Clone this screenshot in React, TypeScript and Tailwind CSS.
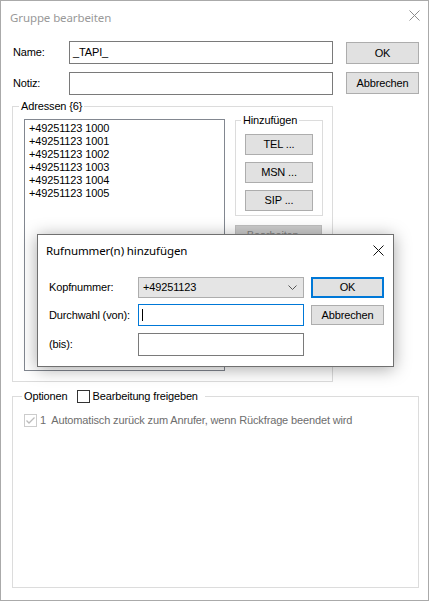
import React from "react";

function XIcon({ color, size = 10 }: { color: string; size?: number }) {
  return (
    <svg width={size + 1} height={size + 1} viewBox={`0 0 ${size + 1} ${size + 1}`} className="block">
      <path d={`M0.5 0.5 L${size + 0.5} ${size + 0.5} M${size + 0.5} 0.5 L0.5 ${size + 0.5}`} stroke={color} strokeWidth="1" fill="none" />
    </svg>
  );
}

function Btn({ children, className = "" }: { children: React.ReactNode; className?: string }) {
  return (
    <div className={`flex items-center justify-center bg-[#e1e1e1] border border-[#adadad] ${className}`}>{children}</div>
  );
}

export default function App() {
  const numbers = ["1000", "1001", "1002", "1003", "1004", "1005"];
  return (
    <div className="w-[430px] h-[601px] bg-white">
      <div className="relative w-[429px] h-[601px] border border-[#aaaaaa] bg-white font-['Liberation_Sans',Arial,sans-serif] text-[11px] leading-[13px] tracking-[-0.14px] text-black">
        {/* title bar */}
        <div className="h-[33px] flex justify-between pl-[9px] pr-[8px]">
          <span className="self-center font-['Noto_Sans',sans-serif] text-[11.5px] tracking-[-0.1px] text-[#999999]">Gruppe bearbeiten</span>
          <div className="mt-[9px]">
            <XIcon color="#8c8c8c" />
          </div>
        </div>

        {/* body */}
        <div className="pl-[11px] pt-[7px]">
          <div className="flex">
            {/* left column */}
            <div className="w-[321px]">
              <div className="flex items-center h-[23px]">
                <span className="w-[57px] pl-[1px]">Name:</span>
                <div className="w-[264px] h-[23px] border border-[#7a7a7a] flex items-center pl-[3px]">_TAPI_</div>
              </div>
              <div className="flex items-center h-[23px] mt-[8px]">
                <span className="w-[57px] pl-[1px]">Notiz:</span>
                <div className="w-[264px] h-[23px] border border-[#7a7a7a]"></div>
              </div>

              <fieldset className="mt-[4px] h-[283px] border border-[#dcdcdc]">
                <legend className="ml-[6px] px-[2px] leading-[14px]">Adressen {"{6}"}</legend>
                <div className="flex items-start pl-[11px]">
                  <div className="mt-[6px] w-[201px] h-[252px] border border-[#828790] pl-[4px] pt-[2px]">
                    {numbers.map((n) => (
                      <div key={n} className="leading-[13px] whitespace-pre">+49251123 {n}</div>
                    ))}
                  </div>
                  <div className="ml-[10px] flex flex-col">
                    <fieldset className="w-[88px] border border-[#dcdcdc] pb-[4px]">
                      <legend className="ml-[5px] px-[2px] leading-[14px]">Hinzufügen</legend>
                      <div className="flex flex-col pl-[9px]">
                        <Btn className="mt-[7px] w-[68px] h-[21px]">TEL ...</Btn>
                        <Btn className="mt-[7px] w-[68px] h-[21px]">MSN ...</Btn>
                        <Btn className="mt-[7px] w-[68px] h-[21px]">SIP ...</Btn>
                      </div>
                    </fieldset>
                    <div className="mt-[9px] w-[87px] h-[21px] flex items-center justify-center bg-[#cccccc] border border-[#bfbfbf] text-[#838383]">
                      Bearbeiten ...
                    </div>
                  </div>
                </div>
              </fieldset>
            </div>

            {/* right column */}
            <div className="ml-[13px] w-[73px] flex flex-col">
              <Btn className="mt-[1px] w-[73px] h-[22px]">OK</Btn>
              <Btn className="mt-[8px] w-[73px] h-[22px]">Abbrechen</Btn>
            </div>
          </div>

          {/* Optionen */}
          <fieldset className="mt-[7px] w-[407px] h-[199px] border border-[#dcdcdc]">
            <legend className="ml-[9px] pl-[2px] pr-[7px] leading-[14px]">
              <span className="flex items-center">
                <span>Optionen</span>
                <span className="ml-[9px] w-[13px] h-[13px] border border-[#333333] bg-white"></span>
                <span className="ml-[3px]">Bearbeitung freigeben</span>
              </span>
            </legend>
            <div className="flex items-center mt-[11px] pl-[11px] text-[#6d6d6d]">
              <span className="w-[13px] h-[13px] border border-[#cccccc] bg-white flex items-center justify-center">
                <svg width="11" height="11" viewBox="0 0 11 11">
                  <path d="M1.5 5.5 L4 8 L9.5 2.5" stroke="#bcbcbc" strokeWidth="1.3" fill="none" />
                </svg>
              </span>
              <span className="ml-[3px] whitespace-pre">1  Automatisch zurück zum Anrufer, wenn Rückfrage beendet wird</span>
            </div>
          </fieldset>
        </div>

        {/* modal */}
        <div className="absolute left-[36px] top-[233px] w-[357px] h-[133px] border border-[#707070] bg-white shadow-[0_2px_16px_rgba(0,0,0,0.35)]">
          <div className="h-[31px] flex items-center justify-between pl-[8px] pr-[9px]">
            <span className="font-['Noto_Sans',sans-serif] text-[11.5px] tracking-[-0.1px] text-black">Rufnummer(n) hinzufügen</span>
            <XIcon color="#111111" />
          </div>
          <div className="pl-[11px] pt-[11px]">
            <div className="flex items-center">
              <span className="w-[89px]">Kopfnummer:</span>
              <div className="w-[166px] h-[21px] bg-[#e5e5e5] border border-[#adadad] flex items-center justify-between pl-[4px] pr-[6px]">
                <span>+49251123</span>
                <svg width="9" height="5" viewBox="0 0 9 5">
                  <path d="M0.5 0.5 L4.5 4.5 L8.5 0.5" stroke="#555555" strokeWidth="1" fill="none" />
                </svg>
              </div>
              <div className="ml-[7px] w-[73px] h-[21px] bg-[#e1e1e1] border-2 border-[#0078d7] flex items-center justify-center">OK</div>
            </div>
            <div className="flex items-center mt-[6px]">
              <span className="w-[89px]">Durchwahl (von):</span>
              <div className="w-[166px] h-[22px] border border-[#0078d7] flex items-center pl-[3px]">
                <span className="w-[1px] h-[12px] bg-black"></span>
              </div>
              <Btn className="ml-[7px] w-[73px] h-[20px]">Abbrechen</Btn>
            </div>
            <div className="flex items-center mt-[7px]">
              <span className="w-[89px]">(bis):</span>
              <div className="w-[166px] h-[23px] border border-[#7a7a7a]"></div>
            </div>
          </div>
        </div>
      </div>
    </div>
  );
}
